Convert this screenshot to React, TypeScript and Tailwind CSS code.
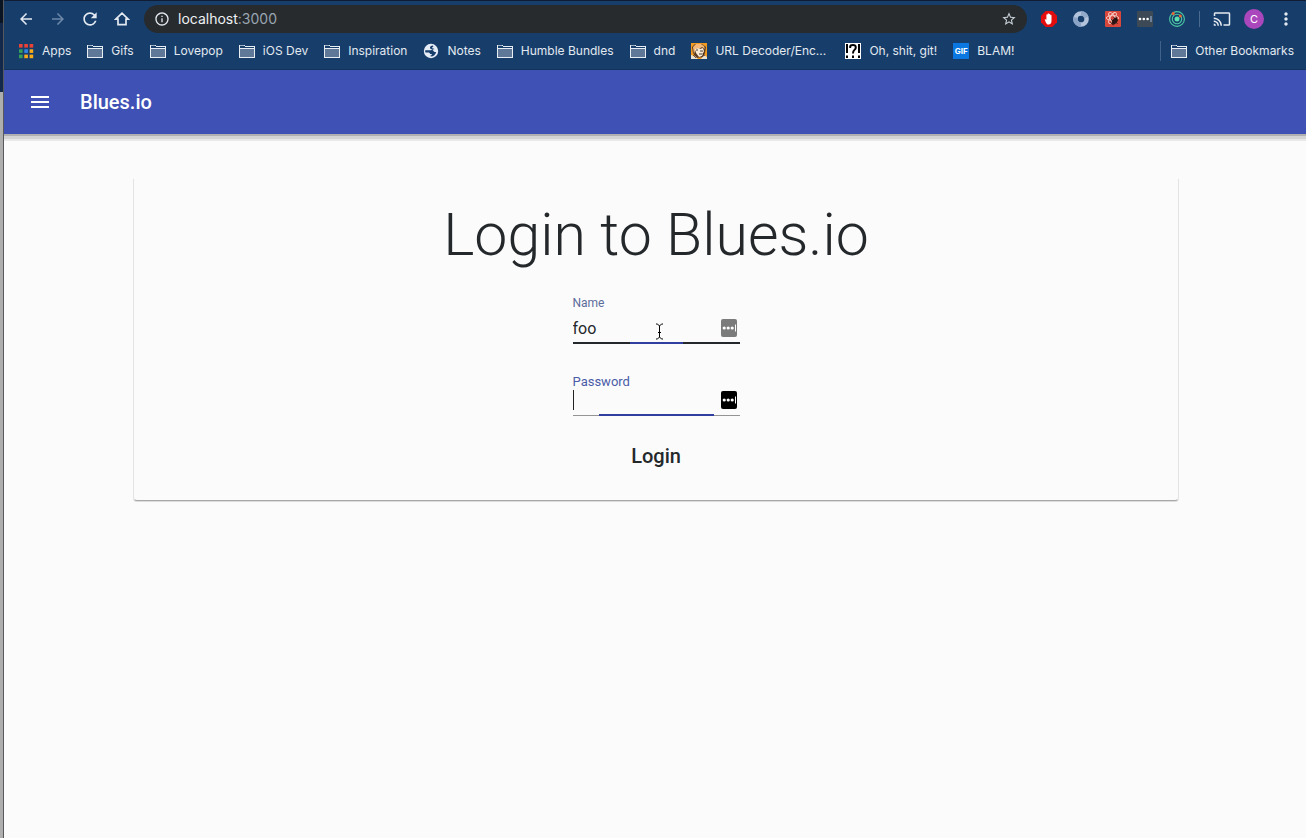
import { useState, type ReactNode } from "react";
import {
  MdArrowBack,
  MdArrowForward,
  MdCast,
  MdInfoOutline,
  MdMenu,
  MdMoreVert,
  MdRefresh,
  MdStarBorder,
} from "react-icons/md";

function HomeIcon() {
  return (
    <svg viewBox="0 0 16 16" className="size-4" fill="none" stroke="currentColor" strokeWidth="1.7">
      <path d="M1.8 8.2 8 2.2l6.2 6H12v5.4H4V8.2z" />
    </svg>
  );
}

function FolderIcon() {
  return (
    <svg viewBox="0 0 16 16" className="size-4 shrink-0" shapeRendering="crispEdges">
      <path d="M1 6h14v8H1z" fill="#5f7898" />
      <path d="M0 2h6v1h10v12H0z M1 3v2h14V4H6V3z M1 6v8h14V6z" fill="#e8edf3" fillRule="evenodd" />
      <path d="M1 2h4v1H1z" fill="#9fb0c4" />
    </svg>
  );
}

function AppsIcon() {
  const rows = [
    ["#ea4335", "#ea4335", "#ea4335"],
    ["#34a05a", "#2f86e8", "#f9ab1a"],
    ["#34a05a", "#f9ab1a", "#f9ab1a"],
  ];
  return (
    <svg viewBox="0 0 16 16" className="size-4 shrink-0">
      {rows.map((row, y) =>
        row.map((fill, x) => (
          <rect key={`${x}-${y}`} x={1 + x * 5.3} y={1 + y * 5.3} width="3.6" height="3.6" fill={fill} />
        )),
      )}
    </svg>
  );
}

function GlobeIcon() {
  return (
    <svg viewBox="0 0 16 16" className="size-4 shrink-0">
      <circle cx="8" cy="8" r="7.2" fill="#e6edf7" />
      <path
        d="M9.800 2.400C8 2.600 6.800 3.600 7 4.900c.2 1 1.200 1.200 2.200 1.300-.2.900-1 1-1.800 1H2.200c-.2 1 0 1.700.3 2.300h3.200c1 .1 1.300.6 1.200 1.400h1.900c.2 1-.8 1.500-1.500 1.700l.4 1c3-.1 5-2 5.400-4.700h-1.300c-1.300 0-1.200-1.700-2.400-1.900.1-.7.800-.8 2.100-.8-.5-.9-1.600-.9-2.600-1 .1-.9.900-1.300 1.600-1.800z"
        fill="#173e6b"
      />
    </svg>
  );
}

function PortraitIcon() {
  return (
    <svg viewBox="0 0 16 16" className="size-4 shrink-0">
      <path d="M0 0h16v16H0z" fill="#f29a1f" />
      <path d="M1 4 4 1h7l4 3-1 6-2 4-7 1-3-5z" fill="#5a3b20" />
      <path d="M2 4l3-3h5l3 2 1 3-3-2-3 2-2-1-2 3-1 3z" fill="#f4b878" />
      <path d="M4 6l3-1 2 1 3-1 1 3-2 5-3 1-3-4z" fill="#f8ead6" />
      <path d="M5 7h2M9 8h3M8 11h3M12 10l1 3" stroke="#36281e" strokeWidth="0.9" />
      <path d="M0 12l4 1 3 3H0zM13 12l3 2v2h-6z" fill="#e9dfcf" />
      <path d="M2 12l3 3M10 14l4-2" stroke="#4b3524" strokeWidth="0.8" />
    </svg>
  );
}

function InterrobangIcon() {
  return (
    <svg viewBox="0 0 16 16" className="size-4 shrink-0">
      <path d="M0 0h16v16H0z" fill="#fff" />
      <path d="M2 1v9M14 1v9M2 12.500V15M14 12.500V15M8 12.500V15" stroke="#000" strokeWidth="2" />
      <path d="M5.200 5V3.500Q5.400 2 8 2t2.800 2-1.400 3Q8 8 8 10.500" fill="none" stroke="#000" strokeWidth="2" />
    </svg>
  );
}

function GifIcon() {
  return (
    <span className="flex size-4 shrink-0 items-center justify-center bg-[#0a78e0] text-[8px] leading-none font-bold text-white">
      GIF
    </span>
  );
}

function BlockerIcon() {
  return (
    <svg viewBox="0 0 16 16" className="size-4">
      <path d="M4.700 0h6.600L16 4.700v6.600L11.300 16H4.700L0 11.300V4.700z" fill="#e40d0d" />
      <path
        d="M3.700 8.400c.6-.5 1.200-.2 1.700.4V4c0-.9 1.200-.9 1.200 0V3c0-1 1.300-1 1.300 0v.4c0-.9 1.300-.9 1.300 0v1c0-.8 1.300-.8 1.300 0V10c0 2.200-1.100 3.600-2.800 3.600-1.900 0-2.600-1.300-4-5.200z"
        fill="#fff"
      />
    </svg>
  );
}

function RingIcon() {
  return (
    <svg viewBox="0 0 16 16" className="size-4" fill="none" strokeWidth="4.500">
      <circle cx="8" cy="8" r="5.600" stroke="#b3c3dc" />
      <path d="M2.600 6.500A5.600 5.600 0 0 0 8 13.600" stroke="#8ba3c6" />
      <path d="M8 2.400a5.600 5.600 0 0 1 5.400 4" stroke="#93a9c9" />
    </svg>
  );
}

function ReactBugIcon() {
  return (
    <svg viewBox="0 0 16 16" className="size-4">
      <rect width="16" height="16" rx="1" fill="#d9473a" />
      <g fill="none" stroke="#f8d3cd" strokeWidth="0.9">
        <ellipse cx="7.500" cy="7" rx="6.200" ry="2.400" />
        <ellipse cx="7.500" cy="7" rx="6.200" ry="2.400" transform="rotate(60 7.500 7)" />
        <ellipse cx="7.500" cy="7" rx="6.200" ry="2.400" transform="rotate(120 7.500 7)" />
      </g>
      <ellipse cx="9.800" cy="10.200" rx="2.400" ry="3.600" fill="#2a1414" transform="rotate(35 9.800 10.200)" />
      <path d="M6 8.500l6.500 4M8.500 6.500l4.500 3M5.500 11.500l3 2.500M11 5.500l.5 3" stroke="#2a1414" strokeWidth="1" />
    </svg>
  );
}

function DotsIcon() {
  return (
    <svg viewBox="0 0 16 16" className="size-4">
      <rect width="16" height="16" rx="1" fill="#3d4a55" />
      <circle cx="3" cy="8" r="1.300" fill="#fff" />
      <circle cx="6.800" cy="8" r="1.300" fill="#fff" />
      <circle cx="10.600" cy="8" r="1.300" fill="#fff" />
      <path d="M13 5h2v6h-2z" fill="#6f8299" />
    </svg>
  );
}

function OrbitIcon() {
  return (
    <svg viewBox="0 0 16 16" className="size-4">
      <g fill="none" stroke="#4cc9a4" strokeWidth="1.100">
        <circle cx="8" cy="8" r="7.400" />
        <circle cx="8" cy="8" r="4.700" />
      </g>
      <circle cx="8" cy="8" r="2.500" fill="#5be0b0" />
      <circle cx="4.200" cy="2.400" r="1.500" fill="#f0642f" />
      <circle cx="11.300" cy="5" r="1.500" fill="#f0642f" />
    </svg>
  );
}

function ToolButton({ label, children }: { label: string; children: ReactNode }) {
  return (
    <button type="button" aria-label={label} className="flex size-8 shrink-0 items-center justify-center">
      {children}
    </button>
  );
}

const bookmarks: { name: string; icon: ReactNode; width?: string }[] = [
  { name: "Apps", icon: <AppsIcon /> },
  { name: "Gifs", icon: <FolderIcon /> },
  { name: "Lovepop", icon: <FolderIcon /> },
  { name: "iOS Dev", icon: <FolderIcon /> },
  { name: "Inspiration", icon: <FolderIcon /> },
  { name: "Notes", icon: <GlobeIcon /> },
  { name: "Humble Bundles", icon: <FolderIcon /> },
  { name: "dnd", icon: <FolderIcon /> },
  { name: "URL Decoder/Enc...", icon: <PortraitIcon />, width: "w-[138px]" },
  { name: "Oh, shit, git!", icon: <InterrobangIcon /> },
  { name: "BLAM!", icon: <GifIcon /> },
];

function Bookmark({ name, icon, width = "" }: { name: string; icon: ReactNode; width?: string }) {
  return (
    <a href="#" className={`flex shrink-0 items-center gap-2 whitespace-nowrap ${width}`}>
      {icon}
      {name}
    </a>
  );
}

function BrowserChrome() {
  return (
    <header className="border-t border-[#0f1c33] bg-[#173e6b] font-[Inter,sans-serif] text-[#e3e9f0]">
      <div className="flex h-9 items-center pr-1 pl-1.5">
        <ToolButton label="Back">
          <MdArrowBack className="size-[18px]" />
        </ToolButton>
        <ToolButton label="Forward">
          <MdArrowForward className="size-[18px] text-[#6d88a8]" />
        </ToolButton>
        <ToolButton label="Reload">
          <MdRefresh className="size-5" />
        </ToolButton>
        <ToolButton label="Home">
          <HomeIcon />
        </ToolButton>
        <div className="mx-1.5 flex h-7 min-w-0 flex-1 items-center gap-2 rounded-full bg-[#272b2e] px-2.5">
          <MdInfoOutline className="size-4 shrink-0" />
          <span className="flex-1 text-sm text-[#9aa5b1]">
            <span className="text-[#eef1f4]">localhost</span>:3000
          </span>
          <button type="button" aria-label="Bookmark this page">
            <MdStarBorder className="size-4 text-[#c9d1da]" />
          </button>
        </div>
        <ToolButton label="Content blocker">
          <BlockerIcon />
        </ToolButton>
        <ToolButton label="Ring extension">
          <RingIcon />
        </ToolButton>
        <ToolButton label="React developer tools">
          <ReactBugIcon />
        </ToolButton>
        <ToolButton label="Password manager">
          <DotsIcon />
        </ToolButton>
        <ToolButton label="Orbit extension">
          <OrbitIcon />
        </ToolButton>
        <div className="mx-1.5 h-4 w-px bg-[#4a6a8f]" />
        <ToolButton label="Cast">
          <MdCast className="size-[18px]" />
        </ToolButton>
        <ToolButton label="Profile">
          <span className="flex size-5 items-center justify-center rounded-full bg-[#ab47bc] text-[11px] text-white">C</span>
        </ToolButton>
        <ToolButton label="Menu">
          <MdMoreVert className="size-5" />
        </ToolButton>
      </div>
      <nav className="flex h-[33px] items-start border-b border-[#14335a] pt-1 pr-3 pl-3.5 text-xs leading-5">
        <div className="flex min-w-0 flex-1 gap-4 overflow-hidden">
          {bookmarks.map((b) => (
            <Bookmark key={b.name} name={b.name} icon={b.icon} width={b.width} />
          ))}
        </div>
        <div className="flex border-l border-[#3f618a] pl-2.5">
          <Bookmark name="Other Bookmarks" icon={<FolderIcon />} />
        </div>
      </nav>
    </header>
  );
}

function ManagerBadge({ className }: { className: string }) {
  return (
    <svg viewBox="0 0 16 18" className={className}>
      <rect width="16" height="18" rx="2" fill="currentColor" />
      <circle cx="3.200" cy="9" r="1.600" fill="#fff" />
      <circle cx="7.200" cy="9" r="1.600" fill="#fff" />
      <circle cx="11.200" cy="9" r="1.600" fill="#fff" />
      <path d="M14 5.500h1v7h-1z" fill="#fff" />
    </svg>
  );
}

function TextCursor() {
  return (
    <svg
      viewBox="0 0 9 17"
      className="pointer-events-none absolute top-2 left-[82px] h-[17px] w-[9px]"
      fill="none"
      stroke="#000"
    >
      <path d="M1 1h1.500L4.500 3l2-2H8M1 16h1.500l2-2 2 2H8M4.500 3v11M3 9.500h3" />
    </svg>
  );
}

function LoginForm() {
  const [name, setName] = useState("foo");
  const [password, setPassword] = useState("");
  return (
    <form className="flex flex-col items-center" onSubmit={(e) => e.preventDefault()}>
      <div className="w-[167px]">
        <label htmlFor="name" className="block text-xs leading-4 text-[#5b6c9c]">
          Name
        </label>
        <div className="relative mt-1 flex h-[27px] items-start pt-0.5">
          <input
            id="name"
            value={name}
            onChange={(e) => setName(e.target.value)}
            className="h-6 w-full bg-transparent pr-6 text-base leading-6 outline-none"
          />
          <ManagerBadge className="absolute top-1 right-[3px] h-[18px] w-4 text-[#7b7b7b]" />
          <TextCursor />
        </div>
        <div className="flex h-0.5 justify-center bg-[#24282b]">
          <div className="w-[53px] bg-[#303f9f]" />
        </div>
      </div>
      <div className="mt-[30px] w-[167px]">
        <label htmlFor="password" className="block text-[13px] leading-4 text-[#4a5ba8]">
          Password
        </label>
        <div className="relative flex h-6 items-start">
          <input
            id="password"
            type="password"
            value={password}
            onChange={(e) => setPassword(e.target.value)}
            className="h-5 w-full border-l border-[#222] bg-transparent pr-6 text-base outline-none"
          />
          <ManagerBadge className="absolute top-px right-[3px] h-[18px] w-4 text-black" />
        </div>
        <div className="flex h-0.5 justify-center border-b border-[#949494]">
          <div className="h-0.5 w-[115px] bg-[#303f9f]" />
        </div>
      </div>
      <button type="submit" className="mt-6 text-xl leading-8 font-medium">
        Login
      </button>
    </form>
  );
}

export default function App() {
  return (
    <div className="flex min-h-screen bg-[#fbfbfb]">
      <div className="flex w-1 shrink-0 flex-col border-r border-[#58595c]">
        <div className="h-[23px] bg-[#0b1422]" />
        <div className="h-[69px] bg-[#12294b]" />
        <div className="flex-1 bg-[#aeaeae]" />
      </div>
      <div className="min-w-0 flex-1">
        <BrowserChrome />
        <div className="font-[Roboto,sans-serif] text-[#24282b]">
          <div className="flex h-16 items-center gap-7 bg-[#3f51b5] px-6 text-white shadow-[0_2px_0_#b0b0b0,0_5px_0_#d4d4d4,0_7px_0_#e9e9e9]">
            <button type="button" aria-label="Open menu">
              <MdMenu className="size-6" />
            </button>
            <span className="text-xl font-medium">Blues.io</span>
          </div>
          <main className="pt-[45px] pr-[127px] pl-[129px]">
            <section className="rounded-b border-x border-b border-x-[#e4e4e4] border-b-[#a8a8a8] pt-5 pb-7 shadow-[0_1px_0_#dcdcdc]">
              <h1 className="mb-6 text-center text-[59px] leading-[72px] font-light">Login to Blues.io</h1>
              <LoginForm />
            </section>
          </main>
        </div>
      </div>
    </div>
  );
}
